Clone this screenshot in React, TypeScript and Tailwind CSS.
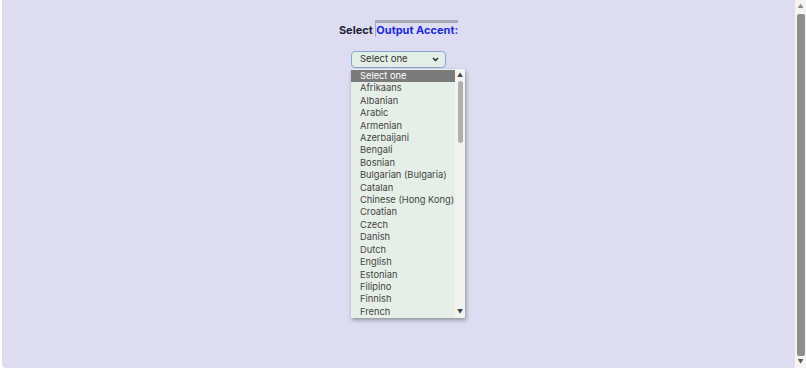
const ACCENTS = [
  "Select one",
  "Afrikaans",
  "Albanian",
  "Arabic",
  "Armenian",
  "Azerbaijani",
  "Bengali",
  "Bosnian",
  "Bulgarian (Bulgaria)",
  "Catalan",
  "Chinese (Hong Kong)",
  "Croatian",
  "Czech",
  "Danish",
  "Dutch",
  "English",
  "Estonian",
  "Filipino",
  "Finnish",
  "French"
];

function PageScrollbar(): JSX.Element {
  return (
    <div className="flex h-[368px] w-[11px] shrink-0 flex-col items-center bg-[#f4f4f4]">
      <div className="flex h-[12px] items-center justify-center text-[6px] leading-none text-[#8a8a8a]">
        ▲
      </div>
      <div className="mt-[2px] h-[342px] w-[8px] rounded-[2px] bg-[#8d8d8d]" />
      <div className="mt-auto flex h-[12px] items-center justify-center text-[6px] leading-none text-[#5a5a5a]">
        ▼
      </div>
    </div>
  );
}

function AccentList(): JSX.Element {
  return (
    <div className="absolute left-0 top-[18px] z-10 flex h-[249px] w-[114px] bg-[#e5efe7] shadow-[1px_2px_4px_rgba(0,0,0,0.35)]">
      <ul className="flex-1 overflow-hidden pt-[1px]">
        {ACCENTS.map((item, i) => (
          <li
            key={item}
            className={`h-[12.42px] whitespace-nowrap pl-[9px] text-[9.3px] leading-[12.42px] ${
              i === 0 ? "bg-[#7b7b7b] text-white" : "text-[#454545]"
            }`}
          >
            {item}
          </li>
        ))}
      </ul>
      <div className="flex w-[10px] flex-col items-center bg-[#f2f4f2]">
        <div className="flex h-[12px] items-center text-[6px] leading-none text-[#444]">▲</div>
        <div className="h-[62px] w-[5px] rounded-full bg-[#b0b0b0]" />
        <div className="mt-auto flex h-[12px] items-center text-[6px] leading-none text-[#444]">▼</div>
      </div>
    </div>
  );
}

export default function App(): JSX.Element {
  return (
    <div
      className="flex h-[368px] w-[806px] overflow-hidden bg-white"
      style={{ fontFamily: "Inter, 'Noto Sans', sans-serif" }}
    >
      <main className="ml-[2px] flex flex-1 flex-col items-center rounded-bl-[4px] bg-[#dddcf0]">
        <h1 className="mt-[23px] text-[11px] font-bold leading-[14px] text-[#1e2238]">
          Select{" "}
          <span className="border-l-[1px] border-t-[3px] border-[#a9a9b6] text-[#1d2bd6]">
            Output Accent:
          </span>
        </h1>
        <div className="relative mt-[14px]">
          <div className="flex h-[17px] w-[95px] items-center justify-between rounded-[4px] border border-[#86a6d0] bg-[#e3eee6] pl-[8px] pr-[6px] text-[9.5px] text-[#333]">
            <span>Select one</span>
            <svg width="7" height="5" viewBox="0 0 7 5">
              <path d="M1 1l2.5 2.5L6 1" fill="none" stroke="#222" strokeWidth="1.4" />
            </svg>
          </div>
          <AccentList />
        </div>
      </main>
      <PageScrollbar />
    </div>
  );
}
